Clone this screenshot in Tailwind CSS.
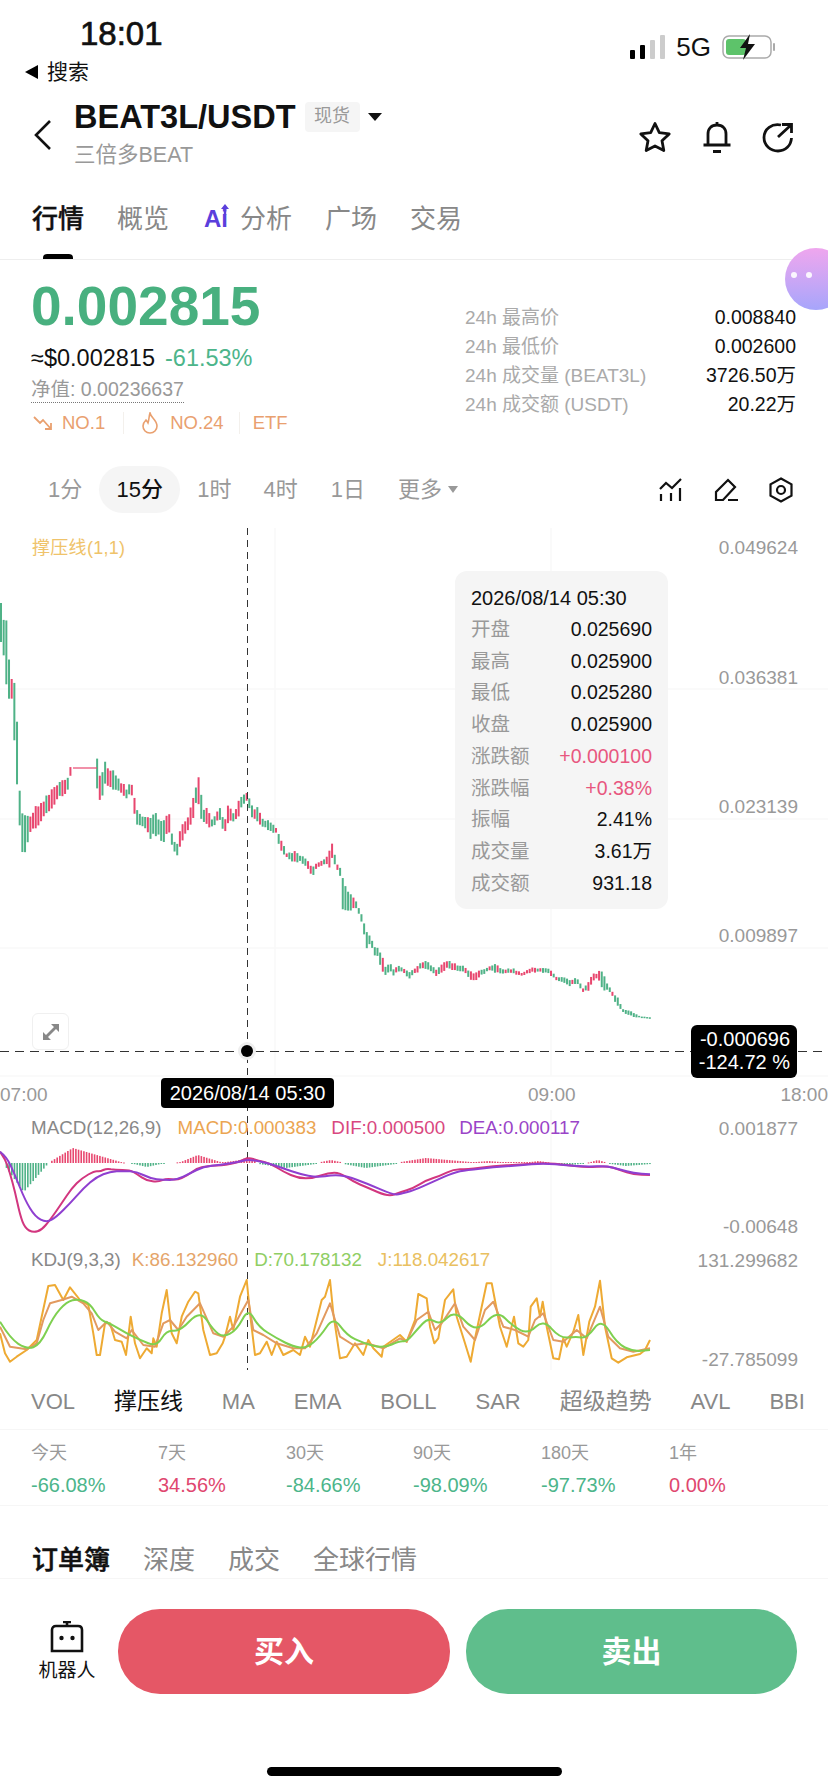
<!DOCTYPE html>
<html lang="en">
<head>
    <meta charset="UTF-8">
    <meta name="viewport" content="width=device-width, initial-scale=1.0">
    <title>BEAT3L/USDT</title>
    <script src="https://cdn.jsdelivr.net/npm/@tailwindcss/browser@4"></script>
</head>
<body class="bg-white font-['Liberation_Sans','Noto_Sans_CJK_SC',sans-serif] text-[#111]">
<div class="relative w-[828px] h-[1792px] overflow-hidden">

    <!-- Status bar -->
    <div class="h-[92px] flex justify-between pl-[25px] pr-[52px]">
        <div>
            <div class="pl-[55px] pt-[16px] text-[33px] leading-[36px] font-medium [-webkit-text-stroke:0.7px_#111]">18:01</div>
            <div class="flex items-center gap-[9px] mt-[7px] text-[21px] leading-[26px]">
                <span class="w-0 h-0 border-y-[7px] border-y-transparent border-r-[13px] border-r-black"></span>
                <span>搜索</span>
            </div>
        </div>
        <div class="flex items-center gap-[11px] h-[24px] mt-[35px]">
            <div class="flex items-end gap-[5px] h-[24px]">
                <span class="w-[5px] h-[9px] rounded-[1px] bg-black"></span>
                <span class="w-[5px] h-[14px] rounded-[1px] bg-black"></span>
                <span class="w-[5px] h-[19px] rounded-[1px] bg-[#ccc]"></span>
                <span class="w-[5px] h-[24px] rounded-[1px] bg-[#ccc]"></span>
            </div>
            <span class="text-[26px] leading-[24px]">5G</span>
            <svg width="54" height="26" viewBox="0 0 54 26">
                <rect x="1" y="2" width="48" height="22" rx="6" fill="none" stroke="#aaa" stroke-width="1.5"/>
                <rect x="4" y="5" width="20" height="16" rx="3" fill="#5dc36a"/>
                <rect x="51" y="9" width="2" height="8" rx="1" fill="#aaa"/>
                <path d="M28 0 L18 14 H24 L21 26 L33 10 H26 Z" fill="#111"/>
            </svg>
        </div>
    </div>

    <!-- Header -->
    <div class="h-[84px] flex items-center pl-[34px] pr-[34px]">
        <svg width="18" height="30" viewBox="0 0 18 30" class="mt-[2px]"><path d="M16 1 L2 15 L16 29" fill="none" stroke="#111" stroke-width="2.6"/></svg>
        <div class="ml-[22px] flex-1">
            <div class="flex items-center mt-[-2px]">
                <span class="text-[32.5px] leading-[36px] font-bold">BEAT3L/USDT</span>
                <span class="ml-[9px] w-[55px] h-[30px] flex items-center justify-center rounded bg-[#f5f5f5] text-[18px] text-[#999]">现货</span>
                <span class="ml-[8px] w-0 h-0 border-x-[7px] border-x-transparent border-t-[8px] border-t-[#111]"></span>
            </div>
            <div class="text-[21.5px] leading-[26px] mt-[7px] text-[#999]">三倍多BEAT</div>
        </div>
        <div class="flex items-center gap-[30px] mt-[6px]">
            <svg width="34" height="32" viewBox="0 0 34 32"><path d="M17 2.5 L21.3 11.6 L31.2 12.9 L24 19.8 L25.8 29.6 L17 24.9 L8.2 29.6 L10 19.8 L2.8 12.9 L12.7 11.6 Z" fill="none" stroke="#111" stroke-width="2.8" stroke-linejoin="round"/></svg>
            <svg width="30" height="32" viewBox="0 0 30 32"><path d="M6 24 V13 C6 7.5 9.5 4 15 4 C20.5 4 24 7.5 24 13 V24 M1.5 24 H28.5 M15 1 V4 M11 30.5 H19" fill="none" stroke="#111" stroke-width="2.8"/></svg>
            <svg width="32" height="32" viewBox="0 0 32 32"><path d="M19 4 C10 2 2 8 2 16.5 C2 24.5 8.5 30 16 30 C23.5 30 29 24.5 29.5 17 M16 16 L29 4 M20 3.5 H29.5 V12" fill="none" stroke="#111" stroke-width="2.8"/></svg>
        </div>
    </div>

    <!-- Tabs -->
    <div class="relative h-[84px] border-b border-[#eee] flex items-start pt-[25px] pl-[32px] text-[26px] leading-[36px] text-[#888]">
        <span class="font-medium text-[#111] [-webkit-text-stroke:0.4px_#111]">行情</span>
        <span class="ml-[33px]">概览</span>
        <span class="ml-[35px] flex items-center">
            <span class="relative w-[28px] text-[24px] font-bold text-[#5b3fdc]">Ai<svg width="8" height="11" viewBox="0 0 8 11" class="absolute left-[17px] top-[3px]"><path d="M4 0 L8 5 H5.200 V11 H2.800 V5 H0 Z" fill="#5b3fdc"/></svg></span>
            <span class="ml-[8px]">分析</span>
        </span>
        <span class="ml-[33px]">广场</span>
        <span class="ml-[33px]">交易</span>
        <span class="absolute left-[43px] bottom-0 w-[30px] h-[5px] rounded-t bg-black"></span>
    </div>

    <!-- Floating assistant -->
    <div class="absolute left-[785px] top-[248px] w-[62px] h-[62px] rounded-full bg-gradient-to-b from-[#efa6ee] to-[#a6a5fb]">
        <span class="absolute left-[6px] top-[24px] w-[6px] h-[6px] rounded-full bg-white/90"></span>
        <span class="absolute left-[21px] top-[24px] w-[6px] h-[6px] rounded-full bg-white/90"></span>
    </div>

    <!-- Price summary -->
    <div class="h-[206px] flex justify-between pl-[31px] pr-[32px]">
        <div>
            <div class="mt-[16px] text-[55px] leading-[60px] font-bold text-[#48b07f]">0.002815</div>
            <div class="mt-[8px] flex items-center gap-[10px] text-[23.5px] leading-[28px]">
                <span>≈$0.002815</span>
                <span class="text-[#4cb58a]">-61.53%</span>
            </div>
            <div class="mt-[5px] w-fit whitespace-nowrap text-[19.5px] leading-[25px] text-[#999] border-b border-dotted border-[#777]">净值: 0.00236637</div>
            <div class="mt-[7px] flex items-center text-[18.5px] leading-[26px] text-[#e9a06f]">
                <svg width="20" height="16" viewBox="0 0 20 16" class="ml-[2px]"><path d="M1 2 L7 8 L10 5 L18 14 M18 8 V14 H12" fill="none" stroke="#e9a06f" stroke-width="1.8"/></svg>
                <span class="ml-[9px]">NO.1</span>
                <span class="ml-[18px] w-px h-[22px] bg-[#f3f0ec]"></span>
                <svg width="18" height="22" viewBox="0 0 18 22" class="ml-[17px]"><path d="M9 1 C10 6 16 8 16 14 C16 18 13 21 9 21 C5 21 2 18 2 14 C2 11 4 9 5 8 C6 9 6.500 10 7 11 C8 8 8 4 9 1 Z" fill="none" stroke="#e9a06f" stroke-width="1.6"/></svg>
                <span class="ml-[11px]">NO.24</span>
                <span class="ml-[15px] w-px h-[22px] bg-[#f3f0ec]"></span>
                <span class="ml-[13px]">ETF</span>
            </div>
        </div>
        <div class="w-[331px] mt-[43px] text-[19px] leading-[29px] text-[#aaa]">
            <div class="flex justify-between"><span>24h 最高价</span><span class="text-[19.5px] text-[#111]">0.008840</span></div>
            <div class="flex justify-between"><span>24h 最低价</span><span class="text-[19.5px] text-[#111]">0.002600</span></div>
            <div class="flex justify-between"><span>24h 成交量 (BEAT3L)</span><span class="text-[19.5px] text-[#111]">3726.50万</span></div>
            <div class="flex justify-between"><span>24h 成交额 (USDT)</span><span class="text-[19.5px] text-[#111]">20.22万</span></div>
        </div>
    </div>

    <!-- Period selector -->
    <div class="h-[62px] flex items-start pl-[48px] pr-[35px] text-[22px] text-[#999]">
        <span class="h-[47px] flex items-center">1分</span>
        <span class="ml-[17px] h-[47px] w-[81px] flex items-center justify-center rounded-full bg-[#f5f5f5] text-[#111] font-medium">15分</span>
        <span class="ml-[17px] h-[47px] flex items-center">1时</span>
        <span class="ml-[32px] h-[47px] flex items-center">4时</span>
        <span class="ml-[33px] h-[47px] flex items-center">1日</span>
        <span class="ml-[33px] h-[47px] flex items-center">更多<span class="ml-[6px] w-0 h-0 border-x-[5px] border-x-transparent border-t-[7px] border-t-[#999]"></span></span>
        <div class="ml-auto h-[47px] flex items-center gap-[31px]">
            <svg width="24" height="24" viewBox="0 0 24 24"><path d="M1 11 L7 5 L13 10 L22 1 M2 16 V23 M12 15 V23 M21 10 V23" fill="none" stroke="#111" stroke-width="2.2"/></svg>
            <svg width="24" height="24" viewBox="0 0 24 24"><path d="M2 22 V14 L14 2 L21 9 L9 22 Z M14 22 H24" fill="none" stroke="#111" stroke-width="2.2"/></svg>
            <svg width="24" height="26" viewBox="0 0 24 26"><path d="M12 1.500 L22.500 7.300 V18.700 L12 24.500 L1.500 18.700 V7.300 Z" fill="none" stroke="#111" stroke-width="2.2"/><circle cx="12" cy="13" r="4" fill="none" stroke="#111" stroke-width="2.200"/></svg>
        </div>
    </div>

    <!-- Chart canvas, top of this block is y=528 -->
    <div class="relative h-[852px]">
        <svg id="chart" class="absolute inset-0" width="828" height="852" viewBox="0 528 828 852">
            <path d="M0 689 H828 M0 819 H828 M0 948 H828 M0 1076 H828 M275 528 V1076 M551 528 V1076 M551 1110 V1370" stroke="#f9f9f9" stroke-width="1.5" fill="none"/>
            <g id="hist"></g>
            <g id="candles"></g>
            <path d="M73 768 H97" stroke="#e8476f" stroke-width="1.2"/>
            <path d="M247.5 528 V1370" stroke="#333" stroke-width="1" stroke-dasharray="7 5"/>
            <path d="M0 1051.5 H700 M798 1051.5 H828" stroke="#333" stroke-width="1" stroke-dasharray="9 6"/>
            <circle cx="247" cy="1051" r="9" fill="#eee"/>
            <circle cx="247" cy="1051" r="6" fill="#000"/>
            <path id="dif" fill="none" stroke="#d2367f" stroke-width="2"/>
            <path id="dea" fill="none" stroke="#8f3fd0" stroke-width="2"/>
            <path id="kdjJ" fill="none" stroke="#eeaa33" stroke-width="2" stroke-linejoin="round"/>
            <path id="kdjK" fill="none" stroke="#e29a5f" stroke-width="2" stroke-linejoin="round"/>
            <path id="kdjD" fill="none" stroke="#7ed050" stroke-width="2"/>
        </svg>

        <span class="absolute left-[32px] top-[9px] text-[18px] leading-[22px] tracking-[0.3px] text-[#efc36a]">撑压线(1,1)</span>
        <span class="absolute right-[30px] top-[9px] text-[19px] leading-[22px] text-[#999]">0.049624</span>
        <span class="absolute right-[30px] top-[139px] text-[19px] leading-[22px] text-[#999]">0.036381</span>
        <span class="absolute right-[30px] top-[268px] text-[19px] leading-[22px] text-[#999]">0.023139</span>
        <span class="absolute right-[30px] top-[397px] text-[19px] leading-[22px] text-[#999]">0.009897</span>

        <!-- Crosshair tooltip -->
        <div class="absolute left-[455px] top-[43px] w-[213px] h-[338px] rounded-xl bg-[#f5f5f5] px-[16px] pt-[13px] text-[19.5px] leading-[31.7px]">
            <div class="text-[20px] leading-[28px] mb-[2px]">2026/08/14 05:30</div>
            <div class="flex justify-between"><span class="text-[#999]">开盘</span><span>0.025690</span></div>
            <div class="flex justify-between"><span class="text-[#999]">最高</span><span>0.025900</span></div>
            <div class="flex justify-between"><span class="text-[#999]">最低</span><span>0.025280</span></div>
            <div class="flex justify-between"><span class="text-[#999]">收盘</span><span>0.025900</span></div>
            <div class="flex justify-between"><span class="text-[#999]">涨跌额</span><span class="text-[#e8577f]">+0.000100</span></div>
            <div class="flex justify-between"><span class="text-[#999]">涨跌幅</span><span class="text-[#e8577f]">+0.38%</span></div>
            <div class="flex justify-between"><span class="text-[#999]">振幅</span><span>2.41%</span></div>
            <div class="flex justify-between"><span class="text-[#999]">成交量</span><span>3.61万</span></div>
            <div class="flex justify-between"><span class="text-[#999]">成交额</span><span>931.18</span></div>
        </div>

        <!-- Expand button -->
        <div class="absolute left-[32px] top-[485px] w-[37px] h-[37px] rounded-md border border-[#f0f0f0] bg-white flex items-center justify-center">
            <svg width="20" height="20" viewBox="0 0 20 20"><path d="M2 18 V10 L5 13 L13 5 L10 2 H18 V10 L15 7 L7 15 L10 18 Z" fill="#888"/></svg>
        </div>

        <!-- Cursor value and date tags -->
        <div class="absolute left-[691px] top-[497px] w-[106px] h-[53px] rounded-md bg-black text-white text-right pr-[7px] pt-[3px] text-[20px] leading-[23px]">
            <div>-0.000696</div>
            <div>-124.72 %</div>
        </div>
        <span class="absolute left-0 top-[556px] text-[19px] leading-[22px] text-[#999]">07:00</span>
        <span class="absolute left-[528px] top-[556px] text-[19px] leading-[22px] text-[#999]">09:00</span>
        <span class="absolute right-0 top-[556px] text-[19px] leading-[22px] text-[#999]">18:00</span>
        <span class="absolute left-[161px] top-[550px] w-[173px] h-[30px] rounded bg-black text-white flex items-center justify-center text-[20px]">2026/08/14 05:30</span>

        <!-- MACD legend -->
        <div class="absolute left-[31px] top-[589px] flex text-[18.8px] leading-[22px] whitespace-nowrap">
            <span class="text-[#888]">MACD(12,26,9)</span>
            <span class="ml-[16px] text-[#eba551]">MACD:0.000383</span>
            <span class="ml-[15px] text-[#d9477f]">DIF:0.000500</span>
            <span class="ml-[14px] text-[#9a44c8]">DEA:0.000117</span>
        </div>
        <span class="absolute right-[30px] top-[590px] text-[19px] leading-[22px] text-[#999]">0.001877</span>
        <span class="absolute right-[30px] top-[688px] text-[19px] leading-[22px] text-[#999]">-0.00648</span>

        <!-- KDJ legend -->
        <div class="absolute left-[31px] top-[721px] flex text-[18.8px] leading-[22px] whitespace-nowrap">
            <span class="text-[#888]">KDJ(9,3,3)</span>
            <span class="ml-[11px] text-[#e5a56a]">K:86.132960</span>
            <span class="ml-[16px] text-[#8fce63]">D:70.178132</span>
            <span class="ml-[16px] text-[#e9c060]">J:118.042617</span>
        </div>
        <span class="absolute right-[30px] top-[722px] text-[19px] leading-[22px] text-[#999]">131.299682</span>
        <span class="absolute right-[30px] top-[821px] text-[19px] leading-[22px] text-[#999]">-27.785099</span>
    </div>

    <!-- Indicator list -->
    <div class="h-[50px] border-b border-[#f6f6f6] flex items-center justify-between pl-[31px] pr-[23px] pb-[6px] text-[22px] text-[#888]">
        <span>VOL</span>
        <span class="text-[23px] text-[#111]">撑压线</span>
        <span>MA</span>
        <span>EMA</span>
        <span>BOLL</span>
        <span>SAR</span>
        <span class="text-[23px]">超级趋势</span>
        <span>AVL</span>
        <span>BBI</span>
    </div>

    <!-- Period returns -->
    <div class="h-[76px] border-b border-[#f6f6f6] grid grid-cols-[127px_128px_127px_128px_128px_1fr] pl-[31px] pt-[11px] text-[18px] leading-[24px] text-[#999]">
        <div>今天<div class="mt-[8px] text-[20px] text-[#4cb58a]">-66.08%</div></div>
        <div>7天<div class="mt-[8px] text-[20px] text-[#e0476f]">34.56%</div></div>
        <div>30天<div class="mt-[8px] text-[20px] text-[#4cb58a]">-84.66%</div></div>
        <div>90天<div class="mt-[8px] text-[20px] text-[#4cb58a]">-98.09%</div></div>
        <div>180天<div class="mt-[8px] text-[20px] text-[#4cb58a]">-97.73%</div></div>
        <div>1年<div class="mt-[8px] text-[20px] text-[#e0476f]">0.00%</div></div>
    </div>

    <!-- Order book tabs -->
    <div class="h-[73px] border-b border-[#f6f6f6] flex items-end gap-[33px] pl-[32px] text-[26px] leading-[36px] text-[#888]">
        <span class="font-medium text-[#111] [-webkit-text-stroke:0.5px_#111]">订单簿</span>
        <span>深度</span>
        <span>成交</span>
        <span>全球行情</span>
    </div>

    <!-- Bottom actions -->
    <div class="flex items-center h-[85px] mt-[30px] pl-[38px] pr-[31px]">
        <div class="w-[58px] flex flex-col items-center">
            <svg width="36" height="32" viewBox="0 0 36 32"><path d="M14 1 H22 M18 1 V5 M3 9 C3 6.500 4.500 5 7 5 H29 C31.500 5 33 6.500 33 9 V30 H3 Z" fill="none" stroke="#111" stroke-width="2.6"/><circle cx="12.500" cy="17" r="2.200" fill="#111"/><circle cx="23.500" cy="17" r="2.200" fill="#111"/></svg>
            <span class="mt-[6px] text-[19px] leading-[24px] whitespace-nowrap">机器人</span>
        </div>
        <button class="ml-[22px] w-[332px] h-[85px] rounded-[42px] bg-[#e55766] text-white text-[30px] font-bold">买入</button>
        <button class="ml-[16px] w-[331px] h-[85px] rounded-[42px] bg-[#5fbe8c] text-white text-[30px] font-bold">卖出</button>
    </div>

    <!-- Home indicator -->
    <div class="absolute left-[267px] top-[1767px] w-[295px] h-[9px] rounded-full bg-black"></div>
</div>

<script>
    const NS = 'http://www.w3.org/2000/svg';
    const GREEN = '#4fb287', RED = '#e8476f';

    // traced envelope of the candles: [x, top, bottom]
    const envelope = [[1,603,642],[4,622,657],[7,620,692],[10,679,702],[12,679,698],[15,684,752],[18,740,800],[20,800,830],[23,817,858],
        [31,810,835],[43,797,820],[53,785,807],[59,782,800],[67,777,793],[71,763,777],[98,749,801],[101,783,801],[103,763,801],[106,757,780],
        [109,772,793],[111,767,790],[117,775,790],[127,787,800],[131,778,792],[134,792,813],[137,808,827],[143,817,828],[150,812,840],[153,810,838],
        [162,815,844],[169,811,838],[173,837,853],[177,843,857],[182,820,847],[188,815,830],[193,793,823],[197,777,803],[200,772,822],[203,807,823],
        [208,807,830],[213,820,827],[219,804,820],[224,822,835],[228,800,827],[233,812,823],[237,803,820],[242,792,810],[246,792,800],[249,795,810],
        [253,807,820],[258,807,827],[263,817,827],[271,822,832],[277,827,835],[280,833,853],[287,853,858],[293,850,863],[302,855,863],[308,860,870],
        [312,868,878],[317,862,868],[325,858,865],[330,848,868],[332,840,863],[337,863,870],[341,868,880],[343,878,922],[347,887,913],[350,893,917],
        [354,898,910],[357,902,910],[360,910,918],[363,918,927],[366,927,955],[368,935,945],[371,935,948],[375,947,958],[378,946,958],[382,955,973],
        [385,965,978],[390,962,972],[393,968,978],[397,965,973],[403,967,973],[409,972,979],[413,968,975],[418,965,973],[420,962,970],[427,959,970],
        [432,965,972],[437,970,978],[441,962,975],[448,960,968],[455,963,972],[463,965,972],[473,972,983],[480,970,977],[490,965,970],[495,963,974],
        [503,969,974],[513,968,974],[522,973,976],[532,966,973],[540,968,972],[550,968,975],[557,977,982],[563,977,982],[570,978,987],[577,978,983],
        [583,987,993],[588,982,992],[592,973,983],[597,972,980],[603,968,990],[607,982,992],[612,990,995],[617,995,1008],[623,1008,1013],[633,1012,1017],
        [640,1016,1018],[650,1017,1019]];

    function noise(i, k) {
        const v = Math.sin(i * 12.9898 + k * 78.233) * 43758.5453;
        return v - Math.floor(v);
    }

    function lerp(table, x) {
        for (let i = 1; i < table.length; i++) {
            if (x <= table[i][0]) {
                const a = table[i - 1], b = table[i], t = (x - a[0]) / (b[0] - a[0] || 1);
                return a.map((v, n) => v + (b[n] - v) * t);
            }
        }
        return table[table.length - 1];
    }

    function addBar(group, x, y1, y2, w, color) {
        const r = document.createElementNS(NS, 'rect');
        r.setAttribute('x', x);
        r.setAttribute('y', Math.min(y1, y2));
        r.setAttribute('width', w);
        r.setAttribute('height', Math.max(Math.abs(y2 - y1), 1));
        r.setAttribute('fill', color);
        group.appendChild(r);
    }

    const candles = document.getElementById('candles');
    for (let i = 0; i * 2.67 <= 650; i++) {
        const x = i * 2.67 + 1;
        if (x > 73 && x < 97) continue;
        const [, top, bottom] = lerp(envelope, x);
        const before = lerp(envelope, x - 4), after = lerp(envelope, x + 4);
        const falling = after[1] + after[2] > before[1] + before[2];
        const pick = noise(i, 1);
        let color = (falling ? pick < 0.72 : pick < 0.3) ? GREEN : RED;
        // first drop and the last run are all down candles
        if (x < 27 || x > 615) color = GREEN;
        if (x > 11 && x < 14) color = RED;
        const h = bottom - top;
        const trim = x < 27 ? 0 : 0.25;
        addBar(candles, x - 1, top + h * noise(i, 2) * trim, bottom - h * noise(i, 3) * trim, 2, color);
    }

    // macd histogram: [x, signed height] around y=1163
    const histTable = [[3,0],[5,4],[23,29],[47,1],[49,-1],[72,-15],[120,-1],[133,1],[146,4],[160,1],[180,-1],[197,-8],[220,-1],[225,-1],[240,-3],[247,-6],[256,-1],
        [258,1],[285,5],[315,1],[320,-1],[330,-3],[340,-1],[343,1],[365,5],[395,1],[400,-1],[425,-5],[470,-1],[475,-1],[488,-2],[500,-1],[530,-1],[538,-2],[545,-1],
        [560,1],[570,2],[580,1],[590,-1],[597,-3],[604,-1],[610,1],[625,3],[650,1]];
    const hist = document.getElementById('hist');
    for (let x = 3; x <= 650; x += 2.67) {
        const v = lerp(histTable, x)[1];
        if (Math.abs(v) >= 0.5) addBar(hist, x, 1163, 1163 + v, 1.6, v > 0 ? GREEN : RED);
    }

    // line series traced from the picture in 3x coordinates; "left" starts at (0,1100), "right" at (400,1130)
    function setLine(id, left, right, smooth) {
        const pts = [];
        for (let i = 0; i < left.length; i += 2) {
            if (left[i] / 3 < 400) pts.push([left[i] / 3, 1100 + left[i + 1] / 3]);
        }
        for (let i = 0; i < right.length; i += 2) {
            pts.push([400 + right[i] / 3, 1130 + right[i + 1] / 3]);
        }
        let d = 'M' + pts[0].map(v => v.toFixed(1)).join(' ');
        for (let i = 1; i < pts.length; i++) {
            const [x, y] = pts[i];
            if (smooth && i < pts.length - 1) {
                // curve through the midpoints so the slow lines stay round
                const mx = (x + pts[i + 1][0]) / 2, my = (y + pts[i + 1][1]) / 2;
                d += ` Q${x.toFixed(1)} ${y.toFixed(1)} ${mx.toFixed(1)} ${my.toFixed(1)}`;
            } else {
                d += ` L${x.toFixed(1)} ${y.toFixed(1)}`;
            }
        }
        document.getElementById(id).setAttribute('d', d);
    }

    setLine('dif',
        [0,155,15,175,30,220,45,275,60,345,75,385,100,398,125,390,150,360,185,310,215,265,245,235,285,212,300,215,320,205,345,210,390,210,410,222,440,242,475,246,500,235,530,240,560,228,590,205,620,198,680,195,720,185,745,172,775,182,810,190,850,215,895,235,940,235,985,218,1020,218,1060,245,1100,262,1165,290],
        [0,187,40,175,80,150,120,138,160,118,200,118,280,108,360,104,430,98,500,105,560,113,620,107,660,120,700,133,750,135], true);
    setLine('dea',
        [0,155,20,170,45,225,75,300,105,350,140,368,170,350,210,310,250,265,290,230,330,215,370,213,410,215,450,235,490,240,530,240,570,220,610,200,660,195,720,185,745,178,800,188,850,205,900,222,950,232,1000,225,1040,228,1100,250,1180,285],
        [0,192,40,182,100,155,160,128,200,120,280,112,360,106,430,100,500,106,560,110,620,108,660,118,700,130,750,133], true);
    setLine('kdjJ',
        [0,700,15,760,30,785,50,770,80,750,110,720,125,650,145,558,165,555,190,600,210,562,240,600,265,615,280,700,290,765,300,765,315,670,330,670,345,720,365,725,378,765,392,650,405,730,420,775,440,745,455,760,460,715,470,740,485,640,500,570,515,700,530,730,545,650,565,605,585,575,595,580,610,690,630,765,650,760,668,730,675,710,690,650,700,690,720,590,740,540,750,640,765,765,780,760,800,725,815,765,830,725,850,765,880,750,900,765,915,710,930,740,950,660,965,600,975,590,990,540,1000,640,1020,775,1040,770,1065,730,1090,765,1105,720,1120,745,1145,770,1150,740],
        [0,615,20,635,45,570,55,492,80,505,90,590,103,640,115,625,135,510,160,478,170,560,195,640,212,695,222,640,245,530,260,460,275,460,300,590,320,650,342,560,355,640,370,650,385,630,392,530,410,505,420,560,428,515,440,590,460,685,477,688,490,625,500,650,520,605,535,555,550,675,568,575,585,530,600,452,615,590,635,685,655,698,680,682,720,672,735,660,750,630], false);
    setLine('kdjK',
        [0,680,30,740,80,748,110,730,130,660,150,610,185,600,215,590,250,610,275,640,295,690,320,665,345,695,380,715,395,690,430,735,465,740,490,670,510,660,535,690,560,650,600,610,640,700,670,710,700,680,745,600,760,690,790,705,830,730,880,745,915,745,950,700,990,610,1020,710,1060,735,1100,730,1150,745],
        [0,625,20,635,50,570,85,545,105,600,125,580,165,520,190,590,225,630,255,540,280,515,310,590,345,600,385,620,405,570,430,550,460,630,490,635,530,600,560,625,600,530,625,620,660,655,700,665,750,655], false);
    setLine('kdjD',
        [0,665,30,715,80,748,120,735,160,650,200,605,235,597,270,610,300,660,330,670,380,700,420,720,470,740,500,690,540,695,600,630,640,690,670,712,710,690,745,625,775,680,830,715,880,740,920,745,960,710,1000,650,1040,705,1090,730,1150,745],
        [0,632,20,635,50,600,85,562,120,585,165,540,230,610,290,540,340,590,385,612,430,568,480,625,530,620,560,625,605,565,650,640,700,665,750,660], true);
</script>
</body>
</html>
